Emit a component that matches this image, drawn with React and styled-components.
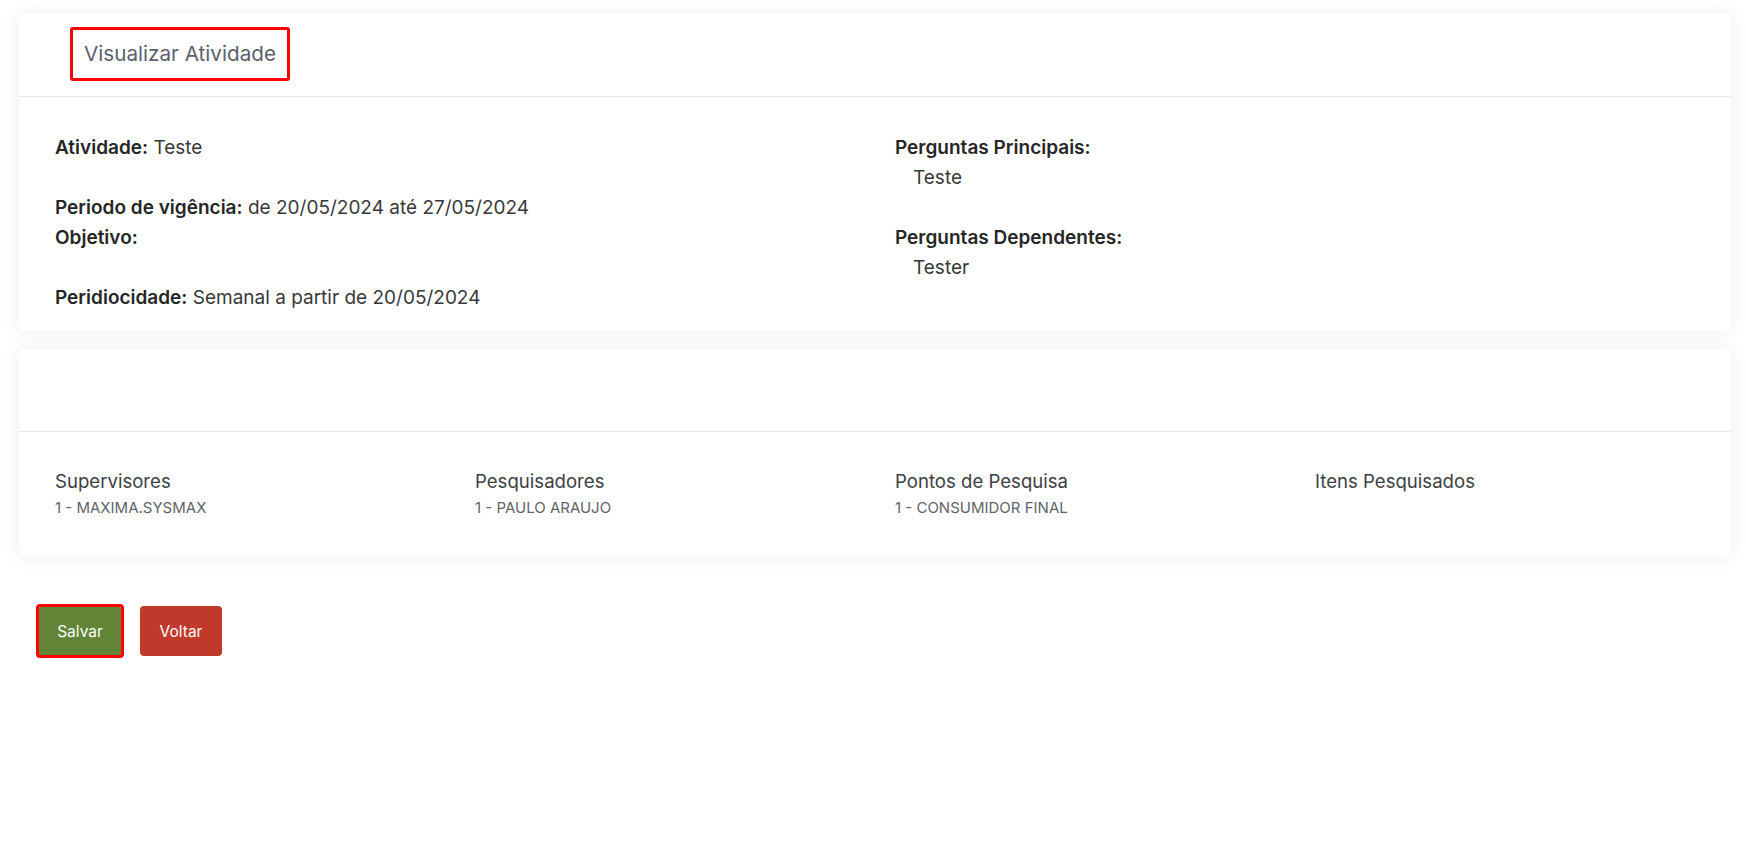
import React from 'react'
import styled, { createGlobalStyle } from 'styled-components'

const GlobalStyle = createGlobalStyle`
  body {
    margin: 0;
    background: #ffffff;
    font-family: Inter, "Noto Sans", Arial, sans-serif;
    color: #333333;
  }
`;

const mainInfo = [
  { label: 'Atividade:', value: 'Teste', gap: true },
  { label: 'Periodo de vigência:', value: 'de 20/05/2024 até 27/05/2024' },
  { label: 'Objetivo:', value: '', gap: true },
  { label: 'Peridiocidade:', value: 'Semanal a partir de 20/05/2024' },
];

const questions = [
  { label: 'Perguntas Principais:', items: ['Teste'] },
  { label: 'Perguntas Dependentes:', items: ['Tester'] },
];

const groups = [
  { title: 'Supervisores', items: ['1 - MAXIMA.SYSMAX'] },
  { title: 'Pesquisadores', items: ['1 - PAULO ARAUJO'] },
  { title: 'Pontos de Pesquisa', items: ['1 - CONSUMIDOR FINAL'] },
  { title: 'Itens Pesquisados', items: [] },
];

export default function App() {
  return (
    <>
      <GlobalStyle />
      <StPage>
        <StCard>
          <StCardHeader>
            <StTitle>Visualizar Atividade</StTitle>
          </StCardHeader>
          <StInfoGrid>
            <StInfoCol>
              {mainInfo.map((row) => (
                <StLine key={row.label} $gap={row.gap}>
                  <StLabel>{row.label}</StLabel> {row.value}
                </StLine>
              ))}
            </StInfoCol>
            <StInfoCol>
              {questions.map((q) => (
                <StQuestionBlock key={q.label}>
                  <StLine>
                    <StLabel>{q.label}</StLabel>
                  </StLine>
                  {q.items.map((item) => (
                    <StIndentedLine key={item}>{item}</StIndentedLine>
                  ))}
                </StQuestionBlock>
              ))}
            </StInfoCol>
          </StInfoGrid>
        </StCard>

        <StCard>
          <StCardHeader />
          <StGroupGrid>
            {groups.map((g) => (
              <StGroupCol key={g.title}>
                <StGroupTitle>{g.title}</StGroupTitle>
                {g.items.map((item) => (
                  <StGroupItem key={item}>{item}</StGroupItem>
                ))}
              </StGroupCol>
            ))}
          </StGroupGrid>
        </StCard>

        <StButtonRow>
          <StButton $color="#618436" $highlight>Salvar</StButton>
          <StButton $color="#c0392b" $tall>Voltar</StButton>
        </StButtonRow>
      </StPage>
    </>
  )
}

const StPage = styled.div`
  padding: 14px 15px 40px 19px;
`;
const StCard = styled.section`
  background-color: #ffffff;
  box-shadow: 0 0 18px rgba(0, 0, 0, 0.07);
  & + & {
    margin-top: 18px;
  }
`;
const StCardHeader = styled.div`
  height: 83px;
  box-sizing: border-box;
  padding: 13px 0 0 51px;
  border-bottom: 1px solid #e9e9ef;
`;
const StTitle = styled.h2`
  display: inline-block;
  margin: 0;
  padding: 0 11px;
  border: 3px solid #ff0000;
  border-radius: 3px;
  line-height: 48px;
  font-size: 20.7px;
  font-weight: 400;
  color: #5d5f6d;
`;
const StInfoGrid = styled.div`
  display: grid;
  grid-template-columns: 1fr 1fr;
  padding: 36px 16px 18px;
`;
const StInfoCol = styled.div`
  padding-left: 20px;
`;
const StQuestionBlock = styled.div`
  & + & {
    margin-top: 30px;
  }
`;
const StLine = styled.div`
  font-size: 19px;
  line-height: 30px;
  color: #383838;
  margin-bottom: ${(p) => (p.$gap ? '30px' : '0')};
`;
const StIndentedLine = styled(StLine)`
  padding-left: 18px;
`;
const StLabel = styled.strong`
  font-weight: 600;
  color: #262626;
`;
const StGroupGrid = styled.div`
  display: grid;
  grid-template-columns: repeat(4, 1fr);
  padding: 37px 16px 39px;
`;
const StGroupCol = styled.div`
  padding-left: 20px;
`;
const StGroupTitle = styled.div`
  font-size: 18.6px;
  line-height: 24px;
  color: #3c4043;
`;
const StGroupItem = styled.div`
  margin-top: 5px;
  font-size: 15px;
  line-height: 20px;
  color: #5f6368;
`;
const StButtonRow = styled.div`
  display: flex;
  align-items: center;
  gap: 19px;
  margin-top: 49px;
  padding-left: 20px;
`;
const StButton = styled.button`
  width: 82px;
  height: ${(p) => (p.$tall ? '50px' : '48px')};
  border: none;
  border-radius: ${(p) => (p.$highlight ? '1px' : '4px')};
  outline: ${(p) => (p.$highlight ? '3px solid #ff0000' : 'none')};
  background-color: ${(p) => p.$color};
  color: #ffffff;
  font-family: Inter, "Noto Sans", Arial, sans-serif;
  font-size: 15.5px;
  font-weight: 400;
  cursor: pointer;
`;
